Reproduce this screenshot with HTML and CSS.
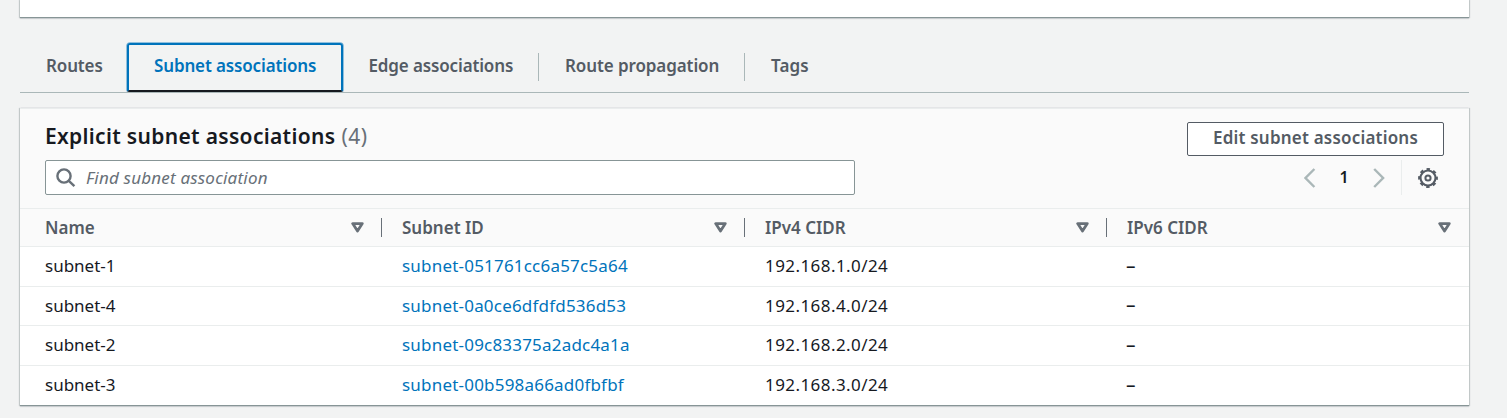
FILE: index.html
```html
<!DOCTYPE html>
<html lang="en">
<head>
<meta charset="utf-8">
<title>Subnet associations</title>
<link rel="stylesheet" href="styles.css">
</head>
<body>
<main class="page">
  <section class="card summary"></section>
  <nav class="tabs">
    <a class="tab">Routes</a>
    <a class="tab active">Subnet associations</a>
    <a class="tab">Edge associations</a>
    <a class="tab divided">Route propagation</a>
    <a class="tab divided tags">Tags</a>
  </nav>
  <section class="card panel">
    <header class="head">
      <div class="left">
        <h2 class="title"><span>Explicit subnet associations</span><span class="count">(4)</span></h2>
        <div class="search">
          <svg width="20" height="20" viewBox="0 0 20 20" fill="none" stroke="#687078" stroke-width="2.4"><circle cx="8" cy="8" r="6.6"/><path d="M12.8 12.8l5.6 5.4"/></svg>
          <span class="placeholder">Find subnet association</span>
        </div>
      </div>
      <div class="right">
        <button class="edit">Edit subnet associations</button>
        <div class="tools">
          <svg width="12" height="20" viewBox="0 0 12 20" fill="none" stroke="#aab7b8" stroke-width="2.4"><path d="M10.4 1L1.5 10l8.9 9"/></svg>
          <span class="pageno">1</span>
          <svg width="12" height="20" viewBox="0 0 12 20" fill="none" stroke="#aab7b8" stroke-width="2.4"><path d="M1.2 1l8.9 9-8.9 9"/></svg>
          <span class="rule"></span>
          <svg width="20" height="20" viewBox="0 0 20 20" fill="none" stroke="#545b64"><circle cx="10" cy="10" r="7.5" stroke-width="2.1"/><circle cx="10" cy="10" r="8.9" stroke-width="2" stroke-dasharray="3.5 3.49" stroke-dashoffset="1.75"/><circle cx="10" cy="10" r="2.6" stroke-width="2"/></svg>
        </div>
      </div>
    </header>
    <div class="row columns">
      <div class="cell">Name<svg class="caret" width="13" height="11" viewBox="0 0 13 11"><path d="M1.7 1.6h9.6L6.5 9z"/></svg></div>
      <div class="cell">Subnet ID<svg class="caret" width="13" height="11" viewBox="0 0 13 11"><path d="M1.7 1.6h9.6L6.5 9z"/></svg></div>
      <div class="cell">IPv4 CIDR<svg class="caret" width="13" height="11" viewBox="0 0 13 11"><path d="M1.7 1.6h9.6L6.5 9z"/></svg></div>
      <div class="cell">IPv6 CIDR<svg class="caret" width="13" height="11" viewBox="0 0 13 11"><path d="M1.7 1.6h9.6L6.5 9z"/></svg></div>
    </div>
    <div class="row"><div class="cell">subnet-1</div><div class="cell"><a>subnet-051761cc6a57c5a64</a></div><div class="cell cidr">192.168.1.0/24</div><div class="cell dash">–</div></div>
    <div class="row short"><div class="cell">subnet-4</div><div class="cell"><a>subnet-0a0ce6dfdfd536d53</a></div><div class="cell cidr">192.168.4.0/24</div><div class="cell dash">–</div></div>
    <div class="row"><div class="cell">subnet-2</div><div class="cell"><a>subnet-09c83375a2adc4a1a</a></div><div class="cell cidr">192.168.2.0/24</div><div class="cell dash">–</div></div>
    <div class="row last"><div class="cell">subnet-3</div><div class="cell"><a>subnet-00b598a66ad0fbfbf</a></div><div class="cell cidr">192.168.3.0/24</div><div class="cell dash">–</div></div>
  </section>
</main>
</body>
</html>
```
FILE: styles.css
```css
* { box-sizing: border-box; }
body { margin: 0; background: #f2f3f3; color: #16191f; font-family: "Noto Sans", "Open Sans", sans-serif; font-size: 17px; overflow: hidden; }
.page { padding: 0 38px 0 20px; height: 418px; }
.card { background: #fff; border-bottom: 1px solid #879596; box-shadow: 0 1px 1px 0 rgba(0, 28, 36, .12), 1px 0 1px 0 rgba(0, 28, 36, .18), -1px 0 1px 0 rgba(0, 28, 36, .18); }
.summary { height: 18px; }
.tabs { display: flex; margin-top: 24px; height: 51px; border-bottom: 1px solid #aab7b8; color: #545b64; font-weight: 600; letter-spacing: -.14px; }
.tab { display: flex; align-items: center; height: 50px; padding: 0 0 3px 26px; white-space: nowrap; }
.tab:first-child { width: 107px; }
.active { width: 216px; height: 49px; margin-top: 1px; border: 2px solid #0073bb; border-bottom-color: #16191f; border-radius: 3px 3px 2px 2px; box-shadow: 0 -1px 0 0 rgba(0, 115, 187, .4), 1px 0 0 0 rgba(0, 115, 187, .4), -1px 0 0 0 rgba(0, 115, 187, .4); background: linear-gradient(#aab7b8, #aab7b8) right -1px top 8px / 1px 28px no-repeat border-box; color: #0073bb; padding: 0 0 4px 25px; }
.active + .tab { width: 195px; padding-left: 25.5px; }
.divided { width: 206px; padding-left: 27px; letter-spacing: -.1px; background: linear-gradient(#aab7b8, #aab7b8) 0 11px / 1px 28px no-repeat; }
.tags { letter-spacing: .1px; }
.panel { height: 298px; margin-top: 15px; border-top: 1px solid #eaeded; }
.head { display: flex; justify-content: space-between; height: 99px; padding: 0 25px; background: #fafafa; }
.title { display: flex; gap: 6px; align-items: center; height: 51px; margin: 0; padding-top: 2px; font-size: 21px; font-weight: 600; letter-spacing: .32px; white-space: nowrap; }
.count { color: #687078; font-weight: 400; letter-spacing: .5px; }
.search { display: flex; align-items: center; gap: 10px; width: 810px; height: 35px; padding-left: 10px; background: #fff; border: 1px solid #879596; border-radius: 2px; }
.placeholder { color: #687078; font-style: italic; letter-spacing: .2px; }
.right { padding-top: 13px; }
.edit { display: block; width: 257px; height: 34px; padding: 0 0 3px; border: 1px solid #545b64; border-radius: 2px; background: #fff; color: #545b64; font: 600 17px "Noto Sans", "Open Sans", sans-serif; letter-spacing: .2px; white-space: nowrap; }
.tools { display: flex; align-items: center; justify-content: flex-end; height: 35px; margin-top: 4px; padding-right: 6px; }
.pageno { width: 57px; padding: 0 1px 2px 0; text-align: center; font-size: 16px; font-weight: 600; }
.rule { width: 1px; height: 35px; margin: 0 16px; background: #eaeded; }
.row { display: grid; grid-template-columns: 362px 363px 362px 362px; height: 40px; border-bottom: 1px solid #eaeded; }
.row.short { height: 39px; }
.row.last { height: 39px; border-bottom: 0; }
.cell { display: flex; align-items: center; padding: 0 0 2px 20px; white-space: nowrap; }
.cell:first-child { padding-left: 25px; }
.row a { color: #0073bb; letter-spacing: .2px; }
.cidr { letter-spacing: .43px; }
.dash { font-size: 19px; padding-left: 19px; }
.columns { height: 39px; border-top: 1px solid #eaeded; background: #fafafa; color: #545b64; font-weight: 600; }
.columns .cell { justify-content: space-between; padding-right: 18.5px; padding-bottom: 1px; background: linear-gradient(#687078, #687078) 100% 9px / 1px 19px no-repeat; }
.columns .cell:last-child { background: none; }
.caret { margin-top: 1px; fill: none; stroke: #687078; stroke-width: 2.8; stroke-linejoin: round; }
```
